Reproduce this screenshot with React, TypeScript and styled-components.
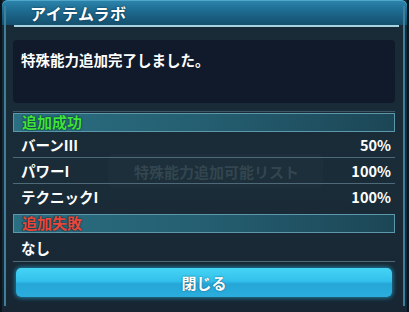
import styled, { createGlobalStyle } from 'styled-components';

const GlobalStyle = createGlobalStyle`
  html, body {
    margin: 0;
    padding: 0;
    background: #0f1b24;
  }
  body {
    font-family: "Noto Sans CJK JP", "Noto Sans", sans-serif;
  }
`;

const Window = styled.div`
  position: relative;
  width: 409px;
  height: 312px;
  box-sizing: border-box;
  overflow: hidden;
  display: flex;
  flex-direction: column;
  background: linear-gradient(180deg, #182a36 0%, #1a2c38 60%, #172632 100%);
  border-left: 2px solid #0c141b;
  border-right: 2px solid #0c141b;
  &::before {
    content: '';
    position: absolute;
    left: 2px;
    top: 6px;
    bottom: 6px;
    width: 2px;
    background: #3f7f9c;
  }
  &::after {
    content: '';
    position: absolute;
    right: 2px;
    top: 6px;
    bottom: 6px;
    width: 2px;
    background: #3f7f9c;
  }
`;

const TitleBar = styled.div`
  height: 25px;
  flex-shrink: 0;
  display: flex;
  align-items: center;
  padding-left: 28px;
  border-radius: 6px 6px 0 0;
  background: linear-gradient(180deg, #2c86ae 0%, #1d6a8f 45%, #154f6d 100%);
  box-shadow: inset 0 1px 0 #4fa6c9;
`;

const Title = styled.h1`
  margin: 0;
  font-size: 16px;
  font-weight: 700;
  color: #ffffff;
  letter-spacing: 0.5px;
  text-shadow: 0 0 2px #0a2a40;
`;

const TitleRule = styled.div`
  height: 2px;
  margin: 0 8px 0 12px;
  background: #a9d2e0;
  flex-shrink: 0;
`;

const Body = styled.div`
  flex: 1;
  display: flex;
  flex-direction: column;
  padding: 13px 12px 0 11px;
`;

const Message = styled.div`
  height: 63px;
  box-sizing: border-box;
  padding: 9px 8px;
  border-radius: 4px;
  background: #111a2a;
  color: #ffffff;
  font-size: 14.5px;
  font-weight: 700;
  line-height: 22px;
`;

const Rule = styled.div`
  height: 1px;
  background: #3c5866;
`;

const SectionHeader = styled.div<{ $tone: 'ok' | 'ng' }>`
  height: 19px;
  box-sizing: border-box;
  display: flex;
  align-items: center;
  padding-left: 8px;
  padding-bottom: 2px;
  border: 1px solid #5c97ab;
  background: linear-gradient(90deg, #2b6f82 0%, #245e70 50%, #1c4656 100%);
  font-size: 15px;
  font-weight: 700;
  color: ${(p) => (p.$tone === 'ok' ? '#3fe23a' : '#e8473c')};
  text-shadow: 0 0 2px #0b2a33, 0 0 1px #0b2a33;
`;

const Row = styled.div<{ $last?: boolean }>`
  height: 25px;
  display: flex;
  align-items: center;
  justify-content: space-between;
  padding: 0 4px 0 8px;
  border-bottom: 1px solid ${(p) => (p.$last ? 'transparent' : '#4e6a78')};
  color: #ffffff;
  font-size: 14.5px;
  font-weight: 700;
  position: relative;
  z-index: 1;
`;

const List = styled.div`
  position: relative;
  margin-top: 0;
  margin-bottom: 4px;
`;

const Ghost = styled.div`
  position: absolute;
  left: 95px;
  top: 22px;
  width: 215px;
  height: 34px;
  border-radius: 5px;
  background: #1c2f3a;
  color: #33464f;
  font-size: 15px;
  font-weight: 700;
  display: flex;
  align-items: center;
  padding-left: 26px;
  box-sizing: border-box;
`;

const Footer = styled.div`
  margin-top: 6px;
  padding: 0 3px;
`;

const CloseButton = styled.button`
  width: 100%;
  height: 29px;
  border: none;
  border-radius: 5px;
  background: linear-gradient(180deg, #45d3f4 0%, #33c1ec 45%, #25a6d6 55%, #2aaedd 100%);
  box-shadow: 0 0 4px 1px #1d7fa3;
  color: #ffffff;
  font-family: inherit;
  font-size: 15px;
  font-weight: 700;
  text-shadow: 0 0 2px #0d5a78;
  cursor: pointer;
`;

const results = [
  { name: 'バーンIII', rate: '50%' },
  { name: 'パワーI', rate: '100%' },
  { name: 'テクニックI', rate: '100%' },
];

export default function App() {
  return (
    <>
      <GlobalStyle />
      <Window>
        <TitleBar>
          <Title>アイテムラボ</Title>
        </TitleBar>
        <TitleRule />
        <Body>
          <Message>特殊能力追加完了しました。</Message>
          <Rule style={{ marginTop: 8, marginBottom: 1 }} />
          <SectionHeader $tone="ok">追加成功</SectionHeader>
          <List>
            <Ghost>特殊能力追加可能リスト</Ghost>
            {results.map((r, i) => (
              <Row key={r.name} $last={i === results.length - 1}>
                <span>{r.name}</span>
                <span>{r.rate}</span>
              </Row>
            ))}
          </List>
          <SectionHeader $tone="ng">追加失敗</SectionHeader>
          <Row style={{ height: 28 }}>
            <span>なし</span>
          </Row>
          <Footer>
            <CloseButton>閉じる</CloseButton>
          </Footer>
        </Body>
      </Window>
    </>
  );
}
